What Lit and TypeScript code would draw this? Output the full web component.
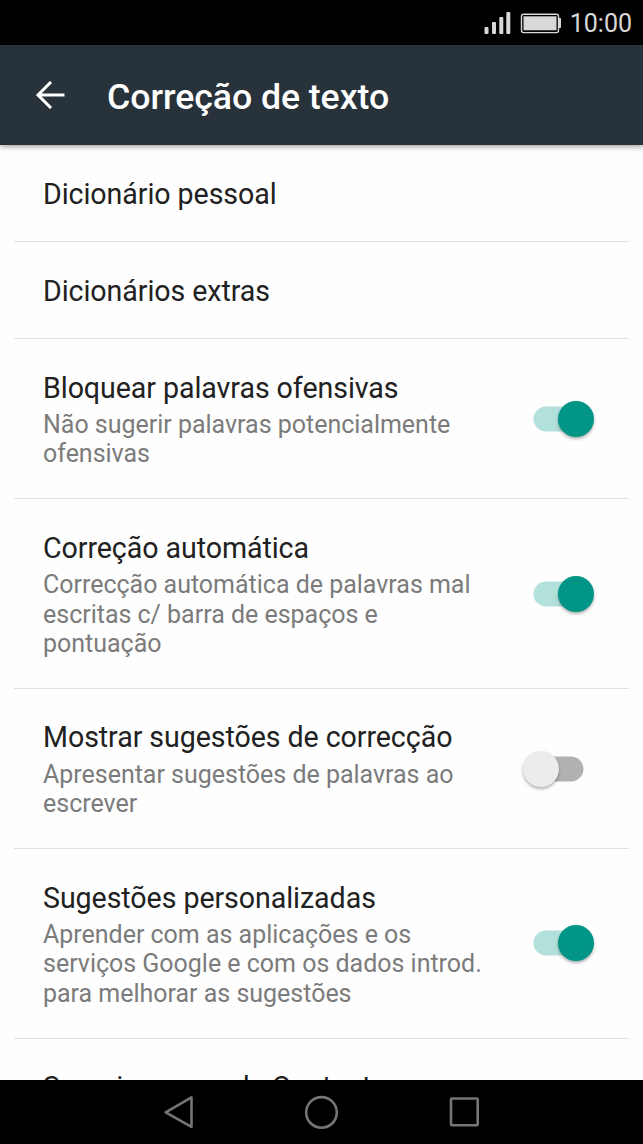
import { LitElement, html, css, nothing } from "lit";
import { customElement, property } from "lit/decorators.js";

@customElement("toggle-switch")
class ToggleSwitch extends LitElement {
  @property({ type: Boolean }) on = false;
  static styles = css`
    :host { display: block; width: 82px; height: 52px; }
    svg { display: block; }
    .thumb { filter: drop-shadow(0 2px 1.5px rgba(0, 0, 0, 0.3)); }
  `;
  render() {
    return html`<svg width="82" height="52" viewBox="0 0 82 52">
      <rect x=${this.on ? 17.5 : 11.5} y="13.5" width=${this.on ? 55 : 56} height="25" rx="12.5" fill=${this.on ? "#b2e0db" : "#b1b1b1"} />
      <circle class="thumb" cx=${this.on ? 60 : 25} cy="26" r="18" fill=${this.on ? "#009587" : "#ececec"} />
    </svg>`;
  }
}

interface Pref { title: string; lines?: string[]; on?: boolean; }

const prefs: Pref[] = [
  { title: "Dicionário pessoal" },
  { title: "Dicionários extras" },
  { title: "Bloquear palavras ofensivas", lines: ["Não sugerir palavras potencialmente", "ofensivas"], on: true },
  { title: "Correção automática", lines: ["Correcção automática de palavras mal", "escritas c/ barra de espaços e", "pontuação"], on: true },
  { title: "Mostrar sugestões de correcção", lines: ["Apresentar sugestões de palavras ao", "escrever"], on: false },
  { title: "Sugestões personalizadas", lines: ["Aprender com as aplicações e os", "serviços Google e com os dados introd.", "para melhorar as sugestões"], on: true },
  { title: "Sugerir nomes de Contactos" },
];

@customElement("app-root")
class AppRoot extends LitElement {
  static styles = css`
    :host { display: flex; flex-direction: column; width: 643px; height: 1144px; overflow: hidden; background: #fefefe; font-family: Roboto, sans-serif; color: #212121; }
    svg { display: block; }
    .status { box-sizing: border-box; flex: none; height: 45px; background: #000; color: #d8d8d8; display: flex; align-items: center; justify-content: flex-end; padding: 1px 11px 0 0; font-size: 25px; line-height: 29px; white-space: nowrap; }
    .status svg { flex: none; margin-right: 9px; }
    .bar { box-sizing: border-box; flex: none; height: 100px; background: #27323a; color: #fff; display: flex; align-items: center; padding-left: 35px; box-shadow: 0 2px 5px rgba(0, 0, 0, 0.35); z-index: 1; }
    .bar h1 { margin: 3px 0 0 42px; font-size: 35.7px; letter-spacing: -0.07px; line-height: 42px; font-weight: 500; white-space: nowrap; }
    .list { flex: 1; min-height: 0; overflow: hidden; }
    .row { box-sizing: border-box; margin: 0 14px; padding: 32.6px 31px 29.7px 29px; border-bottom: 1px solid #e0e0e0; display: flex; justify-content: space-between; align-items: center; }
    .row:first-child { padding-top: 33px; }
    .title { font-size: 28.6px; letter-spacing: -0.07px; line-height: 33.5px; white-space: nowrap; }
    .summary { margin-top: 4.9px; font-size: 25px; letter-spacing: -0.015px; line-height: 29.3px; color: #7b7b7b; white-space: nowrap; }
    toggle-switch { flex: none; margin: -11.3px 0 -8.7px; }
    .nav { flex: none; height: 64.5px; background: #000; display: flex; justify-content: center; }
  `;
  render() {
    return html`
      <div class="status">
        <svg width="77" height="24" viewBox="0 0 77 24">
          <g fill="#d8d8d8">
            <rect x="0.5" y="16" width="4" height="7" rx="1" />
            <rect x="8" y="11" width="4" height="12" rx="1" />
            <rect x="15.3" y="6" width="4" height="17" rx="1" />
            <rect x="22.3" y="1" width="4" height="22" rx="1" />
            <rect x="39.5" y="5.3" width="33" height="14" />
            <path d="M75 7h1.2q.8 0 .8 1v8q0 1-.8 1H75z" />
          </g>
          <rect x="37.5" y="3.2" width="37" height="18.4" rx="2" fill="none" stroke="#d8d8d8" stroke-width="1.4" />
        </svg>
        <span>10:00</span>
      </div>
      <div class="bar">
        <svg width="30" height="28" viewBox="0 0 30 28" fill="none" stroke="#fff" stroke-width="3">
          <path d="M29.5 14H3M16 1L3 14L16 27" />
        </svg>
        <h1>Correção de texto</h1>
      </div>
      <div class="list">
        ${prefs.map((p) => html`<div class="row">
          <div>
            <div class="title">${p.title}</div>
            ${p.lines ? html`<div class="summary">${p.lines.map((l) => html`<div>${l}</div>`)}</div>` : nothing}
          </div>
          ${p.on === undefined ? nothing : html`<toggle-switch ?on=${p.on}></toggle-switch>`}
        </div>`)}
      </div>
      <div class="nav">
        <svg width="643" height="64" viewBox="0 1 643 64" fill="none" stroke="#757575" stroke-width="2.6" stroke-linejoin="round">
          <path d="M165.7 33.4L191.5 18.4V47.8Z" />
          <circle cx="321.5" cy="33.4" r="15.3" />
          <rect x="451" y="19.5" width="26.7" height="26.7" rx="1" />
        </svg>
      </div>`;
  }
}
